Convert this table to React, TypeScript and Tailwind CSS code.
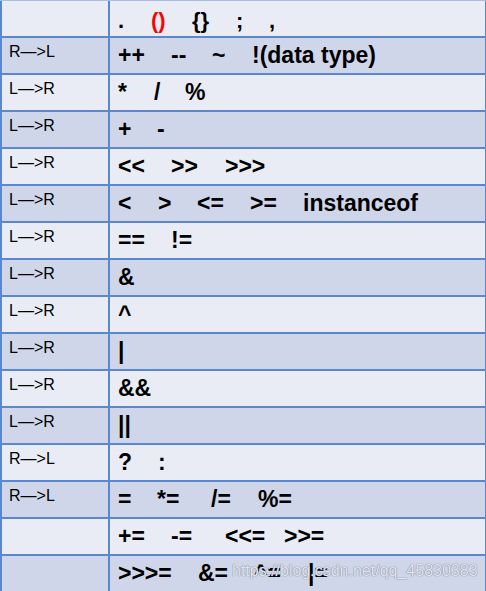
import React from 'react';

type Token = [string, number?, boolean?];

interface Row {
  dir: string;
  tokens: Token[];
}

const rows: Row[] = [
  { dir: '', tokens: [['.', 33], ['()', 41, true], ['{}', 44], [';', 33], [',']] },
  { dir: 'R—>L', tokens: [['++', 53], ['--', 41], ['~', 40], ['!(data type)']] },
  { dir: 'L—>R', tokens: [['*', 36], ['/', 31], ['%']] },
  { dir: 'L—>R', tokens: [['+', 39], ['-']] },
  { dir: 'L—>R', tokens: [['<<', 53], ['>>', 54], ['>>>']] },
  { dir: 'L—>R', tokens: [['<', 40], ['>', 39], ['<=', 53], ['>=', 53], ['instanceof']] },
  { dir: 'L—>R', tokens: [['==', 53], ['!=']] },
  { dir: 'L—>R', tokens: [['&']] },
  { dir: 'L—>R', tokens: [['^']] },
  { dir: 'L—>R', tokens: [['|']] },
  { dir: 'L—>R', tokens: [['&&']] },
  { dir: 'L—>R', tokens: [['||']] },
  { dir: 'R—>L', tokens: [['?', 40], [':']] },
  { dir: 'R—>L', tokens: [['=', 39], ['*=', 54], ['/=', 47], ['%=']] },
  { dir: '', tokens: [['+=', 53], ['-=', 54], ['<<=', 59], ['>>=']] },
  { dir: '', tokens: [['>>>=', 80], ['&=', 56], ['^=', 54], ['|=']] },
];

const App: React.FC = () => {
  return (
    <div
      className="w-[486px] h-[591px] overflow-hidden bg-white"
      style={{ fontFamily: '"Liberation Sans", Arial, sans-serif' }}
    >
      <div className="border-t border-[#a9bde3]">
        {rows.map((row, i) => {
          const first = i === 0;
          const last = i === rows.length - 1;
          return (
            <div
              key={i}
              className={`relative flex h-[37px] border-l-2 border-r border-b-2 border-[#5b87cc] ${
                i % 2 === 0 ? 'bg-[#e9ecf5]' : 'bg-[#cfd6ea]'
              }`}
            >
              <div className="w-[108px] shrink-0 border-r-2 border-[#5b87cc] pl-[7px] pt-[6px] text-[16px] leading-none text-black">
                {row.dir}
              </div>
              <div
                className={`flex-1 whitespace-pre pl-[8px] font-bold leading-none text-black ${
                  first ? 'pt-[9px] text-[22px]' : 'pt-[6px] text-[23px]'
                }`}
              >
                {row.tokens.map(([t, w, red], j) => (
                  <span
                    key={j}
                    className={`inline-block ${red ? 'text-[#ff0000]' : ''}`}
                    style={w ? { width: w } : undefined}
                  >
                    {t}
                  </span>
                ))}
              </div>
              {last && (
                <div
                  className="absolute left-[230px] top-[7px] whitespace-nowrap text-[16px] leading-none text-[#f1f3f9]/90"
                  style={{ textShadow: '0 0 1px #7a8296, 0 0 1px #7a8296' }}
                >
                  https://blog.csdn.net/qq_45830383
                </div>
              )}
            </div>
          );
        })}
      </div>
    </div>
  );
};

export default App;
